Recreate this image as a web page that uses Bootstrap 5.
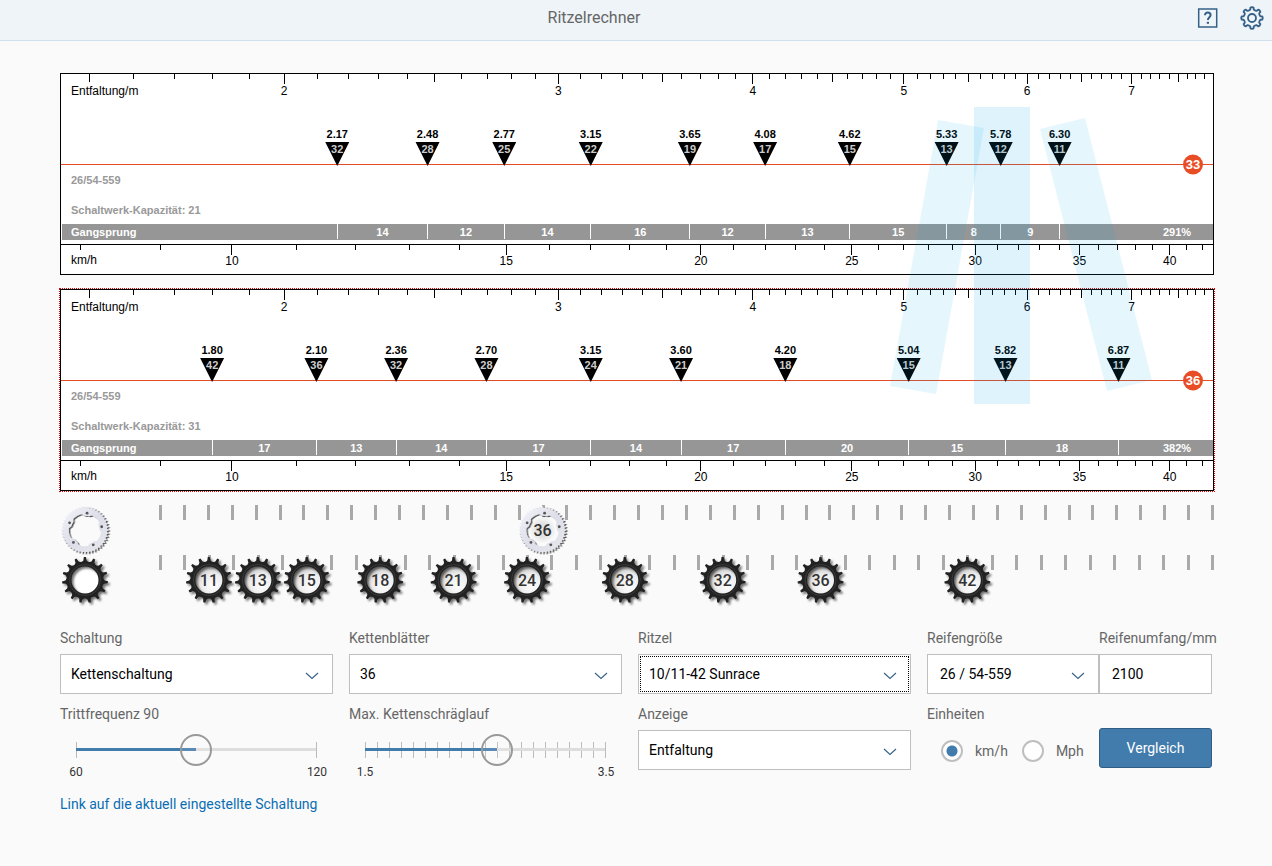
<!DOCTYPE html>
<html lang="de">
<head>
<meta charset="utf-8">
<meta name="viewport" content="width=device-width, initial-scale=1">
<title>Ritzelrechner</title>
<link href="https://cdn.jsdelivr.net/npm/bootstrap@5.3.0/dist/css/bootstrap.min.css" rel="stylesheet">
<style>
  body { background: #fafafa; font-family: Roboto, "Liberation Sans", sans-serif; font-size: 14px; line-height: 20px; color: #000; }
  .topbar { height: 41px; background: #eff4f9; border-bottom: 1px solid #d1e0ee; padding-bottom: 5px; }
  .topbar h1 { font-size: 16px; line-height: 20px; color: #666; font-weight: 400; }
  .topbar .btn { width: 48px; height: 36px; color: #346187; border: 0; }
  .topbar .btn-gear { width: 40px; }
  .page-body { padding: 32px 60px; }
  .charts { margin-right: -2px; gap: 14px; }
  .chart { height: 202px; background: #fff; }
  .chart.current { outline: 1px dotted #d00; }
  .chart svg, .beams { width: 100%; height: 100%; overflow: visible; }
  .beams { position: absolute; inset: 0; pointer-events: none; }
  .chart text { font: 12px "Liberation Sans", Arial, sans-serif; }
  .chart text.bold { font-weight: 700; font-size: 11px; }
  .chart text.blade { font-weight: 700; font-size: 13px; }
  .chart line, .chart rect, .strip rect { shape-rendering: crispEdges; }
  .gears { margin-top: 14px; }
  .gears svg { height: 50px; overflow: visible; }
  .gears .lead-gear { width: 50px; flex: none; }
  .strip { margin-left: 50px; min-width: 0; }
  .strip text { font-size: 16px; font-weight: 500; fill: #333; }
  .controls { display: grid; grid-template-columns: 273fr 273fr 273fr 285fr; gap: 10px 16px; margin-top: 23px; }
  .controls .form-label, .caption { display: block; color: #666; margin-bottom: 6px; line-height: 20px; white-space: nowrap; }
  .controls .form-select, .controls .form-control { height: 40px; border: 1px solid #bfbfbf; border-radius: 0; font-size: 14px; color: #000; background-color: #fff; padding: 0 10px; box-shadow: none; }
  .controls .form-select { padding-right: 40px; background-repeat: no-repeat; background-size: 14px 8px; background-position: right 13px top 17px; background-image: url("data:image/svg+xml,%3Csvg xmlns='http://www.w3.org/2000/svg' viewBox='0 0 14 8'%3E%3Cpath d='M1 1l6 5.500 6-5.500' fill='none' stroke='%23346187' stroke-width='1.1'/%3E%3C/svg%3E"); }
  .controls .picked { outline: 1px dotted #000; outline-offset: -3px; }
  .tyre, .units { display: grid; grid-template-columns: minmax(0, 172fr) minmax(0, 113fr); }
  .tyre .form-select, .tyre .form-control { padding-left: 12px; }
  .unit-options { height: 42px; padding-left: 14px; gap: 12px; }
  .unit-options label { color: #666; }
  .unit-options label + input { margin-left: 2px !important; }
  .controls .form-check-input { width: 22px; height: 22px; margin: 0; border: 2px solid #bfbfbf; background-color: #fff; flex: none; }
  .controls .form-check-input:checked { background-image: radial-gradient(circle, #427cac 5px, transparent 6px); }
  .btn-compare { height: 40px; background: #427cac; border: 1px solid #2f5d85; border-radius: 3px; color: #fff; font-size: 14px; margin-top: -2px; }
  .slider { display: grid; margin: 6px 1px 0 0; }
  .slider > * { grid-area: 1 / 1; }
  .slider .rail { height: 40px; margin: 0 16px; width: calc(100% - 32px); overflow: visible; }
  .slider .form-range { height: 40px; }
  .form-range::-webkit-slider-runnable-track { background: transparent; height: 32px; }
  .form-range::-webkit-slider-thumb { width: 32px; height: 32px; margin: 0; border: 2px solid #999; background: rgba(255,255,255,.12); box-shadow: none; }
  .form-range::-moz-range-track { background: transparent; }
  .form-range::-moz-range-thumb { width: 28px; height: 28px; border: 2px solid #999; background: rgba(255,255,255,.12); }
  .ends { font-size: 12px; line-height: 14px; color: #333; margin-top: -5px; }
  .ends span { width: 32px; text-align: center; }
  .share { color: #0a6eb4; text-decoration: none; margin-top: 15px; display: inline-block; }
</style>
</head>
<body>
<header class="topbar d-flex align-items-center">
  <h1 class="flex-grow-1 text-center mb-0 ps-1">Ritzelrechner</h1>
  <button class="btn p-0" type="button" aria-label="Hilfe">
    <svg width="22" height="22" viewBox="0 0 22 22" fill="none" stroke="currentColor"><rect x="1.700" y="2" width="18" height="18" stroke-width="1.500"/><path d="M8 8.300C8 6.600 9.200 5.600 10.800 5.600S13.600 6.600 13.600 8.100C13.600 10.200 10.900 10.300 10.900 13" stroke-width="2"/><path d="M10.900 14.800v2" stroke-width="2.200"/></svg>
  </button>
  <button class="btn btn-gear p-0" type="button" aria-label="Einstellungen">
    <svg width="26" height="26" viewBox="-13 -13 26 26" fill="none" stroke="currentColor" stroke-width="1.800" stroke-linejoin="round"><path id="cog"/><circle r="4"/></svg>
  </button>
</header>

<main class="page-body">
  <div class="charts position-relative d-flex flex-column">
    <div class="chart"><svg id="chartA" role="img" aria-label="Entfaltung Kettenblatt 33"></svg></div>
    <div class="chart current"><svg id="chartB" role="img" aria-label="Entfaltung Kettenblatt 36"></svg></div>
    <svg class="beams" fill="#00a2f0" aria-hidden="true">
      <svg x="79.203%" overflow="visible">
        <path d="M-36 47 10 55-38 321-84 313Z" opacity=".1"/>
        <path d="M0 34h56v297H0Z" opacity=".125"/>
        <path d="M66 56 111 45 178 307 133 318Z" opacity=".1"/>
      </svg>
    </svg>
  </div>

  <svg width="0" height="0" class="position-absolute" aria-hidden="true">
    <defs>
      <linearGradient id="steel" x1="0" y1="0" x2="1" y2="1"><stop offset="0" stop-color="#f4f4fa"/><stop offset=".5" stop-color="#dedeea"/><stop offset="1" stop-color="#e8e8ee"/></linearGradient>
      <radialGradient id="hub" cx=".65" cy=".7" r=".7"><stop offset="0" stop-color="#fdfdfd"/><stop offset=".6" stop-color="#ececec"/><stop offset="1" stop-color="#c4c4c4"/></radialGradient>
      <radialGradient id="glow" cx=".5" cy=".5" r=".5"><stop offset=".5" stop-color="#e2e2e2"/><stop offset="1" stop-color="#f8f8f8"/></radialGradient>
      <filter id="shade" x="-20%" y="-20%" width="150%" height="150%"><feDropShadow dx="2" dy="2" stdDeviation="1" flood-color="#000" flood-opacity=".55"/></filter>
      <filter id="shadeHard" x="-20%" y="-20%" width="150%" height="150%"><feDropShadow dx="1.500" dy="1" stdDeviation=".4" flood-color="#222" flood-opacity=".75"/></filter>
      <g id="sprocket"><path id="sprocketPath" fill="#222" fill-rule="evenodd" filter="url(#shade)"/><circle r="15.500" fill="none" stroke="#3a3a3a"/></g>
      <g id="ring"><path id="ringPath" fill="url(#steel)" fill-rule="evenodd" filter="url(#shadeHard)"/><g id="bolts" fill="#555"></g></g>
    </defs>
  </svg>
  <div class="gears">
    <div class="d-flex">
      <svg class="lead-gear" viewBox="-25 -25 50 50"><use href="#ring"/></svg>
      <svg class="strip flex-grow-1" id="bladeStrip"></svg>
    </div>
    <div class="d-flex">
      <svg class="lead-gear" viewBox="-25 -25 50 50"><circle r="15" fill="#fff"/><use href="#sprocket"/></svg>
      <svg class="strip flex-grow-1" id="cogStrip"></svg>
    </div>
  </div>

  <form class="controls">
    <div>
      <label class="form-label" for="gearing">Schaltung</label>
      <select class="form-select" id="gearing"><option>Kettenschaltung</option></select>
    </div>
    <div>
      <label class="form-label" for="blades">Kettenblätter</label>
      <select class="form-select" id="blades"><option>36</option></select>
    </div>
    <div>
      <label class="form-label" for="cassette">Ritzel</label>
      <select class="form-select picked" id="cassette"><option>10/11-42 Sunrace</option></select>
    </div>
    <div class="tyre">
      <div>
        <label class="form-label" for="tyre">Reifengröße</label>
        <select class="form-select" id="tyre"><option>26 / 54-559</option></select>
      </div>
      <div>
        <label class="form-label" for="girth">Reifenumfang/mm</label>
        <input class="form-control" id="girth" value="2100">
      </div>
    </div>
    <div>
      <label class="form-label mb-0" for="cadence">Trittfrequenz 90</label>
      <div class="slider">
        <svg class="rail" id="railA" aria-hidden="true"></svg>
        <input class="form-range" type="range" id="cadence" min="60" max="120" value="90">
      </div>
      <div class="ends d-flex justify-content-between"><span>60</span><span>120</span></div>
    </div>
    <div>
      <label class="form-label mb-0" for="skew">Max. Kettenschräglauf</label>
      <div class="slider">
        <svg class="rail" id="railB" aria-hidden="true"></svg>
        <input class="form-range" type="range" id="skew" min="1.5" max="3.5" step="0.1" value="2.6">
      </div>
      <div class="ends d-flex justify-content-between"><span>1.5</span><span>3.5</span></div>
    </div>
    <div>
      <label class="form-label" for="display">Anzeige</label>
      <select class="form-select" id="display"><option>Entfaltung</option></select>
    </div>
    <div>
      <span class="caption" id="unitCaption">Einheiten</span>
      <div class="units">
        <div class="unit-options d-flex align-items-center" role="radiogroup" aria-labelledby="unitCaption">
          <input class="form-check-input" type="radio" name="unit" id="kmh" checked><label for="kmh">km/h</label>
          <input class="form-check-input" type="radio" name="unit" id="mph"><label for="mph">Mph</label>
        </div>
        <button class="btn btn-compare p-0" type="button">Vergleich</button>
      </div>
    </div>
  </form>
  <a class="share" href="#">Link auf die aktuell eingestellte Schaltung</a>
</main>

<script src="https://cdn.jsdelivr.net/npm/bootstrap@5.3.0/dist/js/bootstrap.bundle.min.js"></script>
<script>
  // Logarithmic scale: development in metres -> percent of the chart width
  const pos = m => (224 + 676.5 * Math.log(m / 2)) / 11.54;
  const gearPos = m => pos(m) - .05;
  const vline = (x, y1, y2, c = '#000') => `<line x1="${x}%" x2="${x}%" y1="${y1}" y2="${y2}" stroke="${c}"/>`;
  const mid = (x, y, t, cls = '', fill = '#000') => `<text x="${x}%" y="${y}" class="${cls}" fill="${fill}" text-anchor="middle">${t}</text>`;

  function chart(id, blade, cogs, capacity) {
    let s = '<rect width="100%" height="100%" fill="#fff"/>';
    for (let i = 15; i <= 78; i++) {
      const x = pos(i / 10);
      s += vline(x, 0, i % 10 === 0 ? 11 : i % 5 === 0 ? 9 : 6);
      if (i % 10 === 0) s += mid(x, 22, i / 10);
    }
    s += '<text x="11" y="22">Entfaltung/m</text>';
    s += '<text x="11" y="111" class="bold" fill="#999">26/54-559</text>';
    s += `<text x="11" y="141" class="bold" fill="#999">Schaltwerk-Kapazität: ${capacity}</text>`;
    s += '<rect x="2" y="151" width="100%" height="16" fill="#969696" style="width:calc(100% - 2px)"/>';
    s += '<text x="11" y="163" class="bold" fill="#fff">Gangsprung</text>';
    s += '<line x1="0" x2="100%" y1="91.500" y2="91.500" stroke="#e34d26"/>';
    cogs.forEach((c, i) => {
      const x = gearPos(2.1 * blade / c);
      s += vline(x, 151, 166, '#fff');
      s += `<svg x="${x}%" overflow="visible"><path d="M-12 69H12L0 93Z"/></svg>`;
      s += mid(x, 65, (2.1 * blade / c + 1e-9).toFixed(2), 'bold') + mid(x, 80, c, 'bold', '#ccc');
      if (i) {
        const prev = gearPos(2.1 * blade / cogs[i - 1]);
        s += mid((x + prev) / 2, 163, Math.round((cogs[i - 1] / c - 1) * 100), 'bold', '#fff');
      }
    });
    s += `<svg x="100%" overflow="visible"><circle cx="-21" cy="91.500" r="10" fill="#e84d26"/><text class="blade" x="-21" y="96" fill="#fff" text-anchor="middle">${blade}</text>`
      + `<text class="bold" x="-37" y="163" fill="#fff" text-anchor="middle">${Math.round(cogs[0] / cogs[cogs.length - 1] * 100)}%</text></svg>`;
    s += '<line x1="0" x2="100%" y1="171.500" y2="171.500" stroke="#000"/>';
    for (let v = 8; v <= 42; v++) {
      const x = pos(v / 5.4);
      s += vline(x, 172, v % 5 ? 177 : 182);
      if (v % 5 === 0) s += mid(x, 192, v);
    }
    s += '<text x="11" y="191">km/h</text>';
    s += '<rect width="100%" height="1"/><rect y="201" width="100%" height="1"/><rect width="1" height="202"/><svg x="100%" overflow="visible"><rect x="-1" width="1" height="202"/></svg>';
    document.getElementById(id).innerHTML = s;
  }
  chart('chartA', 33, [32, 28, 25, 22, 19, 17, 15, 13, 12, 11], 21);
  chart('chartB', 36, [42, 36, 32, 28, 24, 21, 18, 15, 13, 11], 31);

  // Toothed outline, radii in px: tooth profile is given as [fraction of pitch, radius]
  function teeth(n, profile) {
    let d = '';
    for (let i = 0; i < n; i++) for (const [f, r] of profile) {
      const a = (i + f) / n * 2 * Math.PI - Math.PI / 2;
      d += (d ? 'L' : 'M') + (r * Math.cos(a)).toFixed(2) + ' ' + (r * Math.sin(a)).toFixed(2);
    }
    return d + 'Z';
  }
  const hole = r => `M${r} 0A${r} ${r} 0 1 0 ${-r} 0A${r} ${r} 0 1 0 ${r} 0Z`;
  sprocketPath.setAttribute('d', teeth(15, [[-.4, 18.6], [-.2, 19.6], [-.12, 23], [.1, 23], [.2, 19.6], [.4, 18.6]]) + hole(13.5));
  let inner = '';
  for (let i = 0; i < 120; i++) {
    const a = i * 3 * Math.PI / 180, c = Math.cos(5 * (a + 83 * Math.PI / 180));
    const r = 16.2 - 2 * Math.min(1, Math.max(0, c * 1.6));
    inner += (i ? 'L' : 'M') + (r * Math.cos(a)).toFixed(2) + ' ' + (r * Math.sin(a)).toFixed(2);
  }
  ringPath.setAttribute('d', teeth(44, [[-.3, 22], [-.12, 23.6], [.12, 23.6], [.3, 22]]) + inner + 'Z');
  bolts.innerHTML = [0, 1, 2, 3, 4].map(i => {
    const a = (-83 + 72 * i) * Math.PI / 180;
    return `<circle cx="${17 * Math.cos(a)}" cy="${17 * Math.sin(a)}" r="1.400"/>`;
  }).join('');
  cog.setAttribute('d', teeth(8, [[-.38, 8.2], [-.26, 8.6], [-.2, 10.4], [0, 10.8], [.2, 10.4], [.26, 8.6], [.38, 8.2]]));

  // Strips of possible tooth counts with the fitted gears
  function strip(id, min, max, fitted, gear, fill) {
    let s = '';
    const x = t => (t - min) / (max - min) * 100;
    for (let t = min; t <= max; t++) s += `<svg x="${x(t)}%" overflow="visible"><rect x="-1" width="3" height="15" fill="#a9a9a9"/></svg>`;
    for (const t of fitted) s += `<svg x="${x(t)}%" overflow="visible"><g transform="translate(0 25)"><circle r="${gear === 'ring' ? 13 : 14}" fill="url(#${fill})"/><use href="#${gear}"/><text y="6" text-anchor="middle">${t}</text></g></svg>`;
    document.getElementById(id).innerHTML = s;
  }
  strip('bladeStrip', 20, 64, [36], 'ring', 'glow');
  strip('cogStrip', 9, 52, [11, 13, 15, 18, 21, 24, 28, 32, 36, 42], 'sprocket', 'hub');

  function rail(id, share, steps) {
    let s = '';
    for (let i = 0; i <= steps; i++) s += `<line x1="${i / steps * 100}%" x2="${i / steps * 100}%" y1="12" y2="28" stroke="#bbb" shape-rendering="crispEdges"/>`;
    s += `<rect y="18" width="100%" height="3" fill="#ddd"/><rect y="18" width="${share}%" height="3" fill="#427cac"/>`;
    document.getElementById(id).innerHTML = s;
  }
  rail('railA', 50, 1);
  rail('railB', 55, 20);
</script>
</body>
</html>
